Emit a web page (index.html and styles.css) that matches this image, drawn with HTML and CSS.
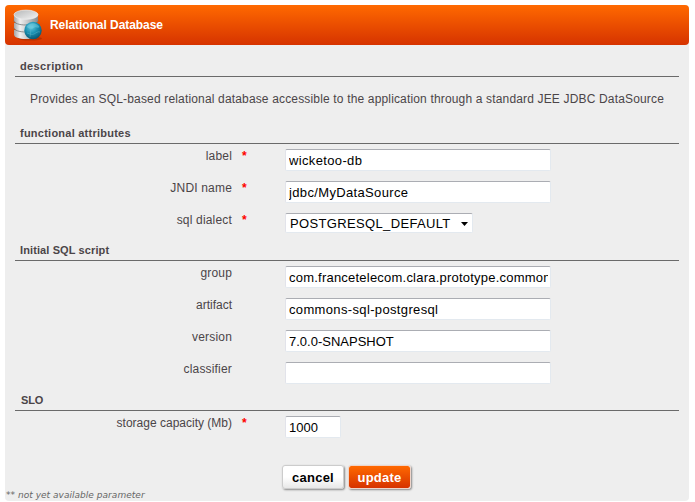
FILE: index.html
```html
<!DOCTYPE html>
<html lang="en">
<head>
<meta charset="utf-8">
<title>Relational Database</title>
<link rel="stylesheet" href="styles.css">
</head>
<body>
<form class="panel">
  <header class="panel-header">
    <svg class="db-icon" width="32" height="32" viewBox="0 0 32 32" aria-hidden="true">
      <defs>
        <linearGradient id="metal" x1="0" x2="1" y1="0" y2="0">
          <stop offset="0" stop-color="#a4a6a8"/><stop offset=".25" stop-color="#efefef"/><stop offset=".5" stop-color="#cfd0d1"/><stop offset="1" stop-color="#85898c"/>
        </linearGradient>
        <linearGradient id="lid" x1="0" x2="1" y1="0" y2="1">
          <stop offset="0" stop-color="#b5b7b8"/><stop offset="1" stop-color="#f4f4f4"/>
        </linearGradient>
        <radialGradient id="ball" cx=".4" cy=".3" r=".75">
          <stop offset="0" stop-color="#62c7df"/><stop offset=".5" stop-color="#198eaf"/><stop offset="1" stop-color="#07516d"/>
        </radialGradient>
      </defs>
      <ellipse cx="17" cy="29.500" rx="12" ry="2" fill="#7d2200" opacity=".4"/>
      <path d="M1 21v4.500c0 2.800 5 4.500 12 4.500s12-1.700 12-4.500V21z" fill="url(#metal)"/>
      <path d="M1 14v4.500c0 2.500 5 4.300 12 4.300s12-1.800 12-4.300V14z" fill="url(#metal)"/>
      <path d="M1 6v5.500c0 2.500 5 4.300 12 4.300s12-1.800 12-4.300V6z" fill="url(#metal)"/>
      <path d="M1 11.700c0 2.500 5 4.300 12 4.300s12-1.800 12-4.300M1 18.700c0 2.500 5 4.300 12 4.300s12-1.800 12-4.300" fill="none" stroke="#747779" stroke-width=".8"/>
      <ellipse cx="13" cy="5.700" rx="12" ry="4.600" fill="url(#lid)" stroke="#eee" stroke-width=".7"/>
      <circle cx="20" cy="21.500" r="8.700" fill="url(#ball)"/>
      <path d="M13.500 18c3-5 10-5 13 0-2 2-3-1-6 1s-5 0-7-1z" fill="#86d9e8" opacity=".4"/>
      <path d="M14 24c3 1 5 2 7 1s4-3 6-2M17 28c1-4 0-8 2-13" fill="none" stroke="#65bfd3" opacity=".4"/>
    </svg>
    <h1 class="panel-title">Relational Database</h1>
  </header>

  <h2 class="section-title section-title--first">description</h2>
  <p class="description">Provides an SQL-based relational database accessible to the application through a standard JEE JDBC DataSource</p>

  <h2 class="section-title">functional attributes</h2>
  <div class="row"><label class="label label--wide" for="label">label</label><span class="required">*</span><input class="field" id="label" value="wicketoo-db"></div>
  <div class="row"><label class="label label--wide" for="jndi">JNDI name</label><span class="required">*</span><input class="field" id="jndi" value="jdbc/MyDataSource"></div>
  <div class="row"><label class="label label--wide" for="dialect">sql dialect</label><span class="required">*</span>
    <div class="select-box"><select class="field select" id="dialect"><option>POSTGRESQL_DEFAULT</option></select><svg class="arrow" width="7" height="4" viewBox="0 0 7 4" aria-hidden="true"><path d="M0 0h7L3.500 4z"/></svg></div>
  </div>

  <h2 class="section-title section-title--sql">Initial SQL script</h2>
  <div class="row"><label class="label label--wide" for="group">group</label><span class="required"></span><input class="field field--group" id="group" value="com.francetelecom.clara.prototype.commons"></div>
  <div class="row"><label class="label" for="artifact">artifact</label><span class="required"></span><input class="field" id="artifact" value="commons-sql-postgresql"></div>
  <div class="row"><label class="label label--wide" for="version">version</label><span class="required"></span><input class="field field--tight" id="version" value="7.0.0-SNAPSHOT"></div>
  <div class="row"><label class="label label--wide" for="classifier">classifier</label><span class="required"></span><input class="field" id="classifier"></div>

  <h2 class="section-title section-title--slo">SLO</h2>
  <div class="row"><label class="label" for="storage">storage capacity (Mb)</label><span class="required">*</span><input class="field field--tight field--short" id="storage" value="1000"></div>

  <div class="actions">
    <button type="button" class="button">cancel</button>
    <button type="button" class="button button--primary">update</button>
  </div>
  <p class="footnote">** not yet available parameter</p>
</form>
</body>
</html>
```
FILE: styles.css
```css
* { box-sizing: border-box; }

body {
  margin: 0;
  padding: 5px 6px 0 5px;
  background: #fff;
  color: #4b4548;
  font-family: "Liberation Sans", Arial, sans-serif;
  font-size: 12px;
  overflow: hidden;
}

h1, h2, p { margin: 0; }

.panel {
  height: 496px;
  background: #eee;
  border-radius: 4px;
}

.panel-header {
  display: flex;
  align-items: center;
  height: 40px;
  padding-left: 8px;
  border-radius: 4px;
  background: linear-gradient(#ff6900, #d63300);
}

.db-icon { display: block; }

.panel-title {
  margin-left: 5px;
  color: #fff;
  font-size: 12px;
  line-height: 16px;
  letter-spacing: -.06px;
}

.section-title {
  height: 22px;
  margin: 0 10px;
  padding: 4px 5px 0;
  border-bottom: 1px solid #6a6a6a;
  font-size: 11px;
  line-height: 14px;
  letter-spacing: .24px;
}

.section-title--first { height: 24px; margin-top: 8px; padding-top: 6px; letter-spacing: .36px; }
.section-title--sql { height: 21px; padding-top: 3px; letter-spacing: .11px; }
.section-title--slo { padding-left: 6px; letter-spacing: -.2px; }

.description {
  height: 45px;
  padding: 14px 0 0 25px;
  line-height: 16px;
  letter-spacing: .16px;
  white-space: nowrap;
}

.row {
  display: grid;
  grid-template-columns: 227px 53px auto;
  justify-content: start;
  height: 32px;
}

.label {
  padding-top: 4px;
  line-height: 16px;
  text-align: right;
}

.label--wide { letter-spacing: .18px; }

.required {
  padding: 4px 0 0 10px;
  color: #f00;
  font-weight: bold;
  line-height: 16px;
}

.field {
  width: 266px;
  height: 22px;
  margin: 5px 0 0;
  padding: 1px 2px 0 3px;
  border: 1px solid #e3e9ef;
  border-top-color: #abadb3;
  border-left-color: #e2e3ea;
  border-radius: 2px;
  background: #fff;
  color: #000;
  font: 13px "Liberation Sans", Arial, sans-serif;
  letter-spacing: .35px;
  outline: 0;
}

.field--group { letter-spacing: .22px; }
.field--tight { letter-spacing: 0; }
.field--short { width: 56px; }

.select-box { position: relative; width: 188px; }

.select {
  appearance: none;
  width: 188px;
  height: 20px;
  padding: 0 4px;
}

.arrow { position: absolute; right: 5px; top: 14px; }

.actions {
  display: flex;
  gap: 4px;
  margin: 22px 0 0 277px;
}

.button {
  height: 24px;
  width: 62px;
  padding: 0;
  border: 1px solid #ccc;
  border-radius: 3px;
  background: linear-gradient(#fff, #fff 50%, #e8e8e8);
  box-shadow: 1px 1px 2px #888;
  color: #000;
  font: bold 13px "Liberation Sans", Arial, sans-serif;
  letter-spacing: .25px;
}

.button--primary {
  width: 63px;
  background: linear-gradient(#ff6900, #d63300) padding-box;
  border-color: #efd5ca;
  color: #fff;
}

.footnote {
  padding-left: 1px;
  color: #666;
  font: italic 9px/12px "DejaVu Sans", Verdana, sans-serif;
  letter-spacing: .03px;
}
```
